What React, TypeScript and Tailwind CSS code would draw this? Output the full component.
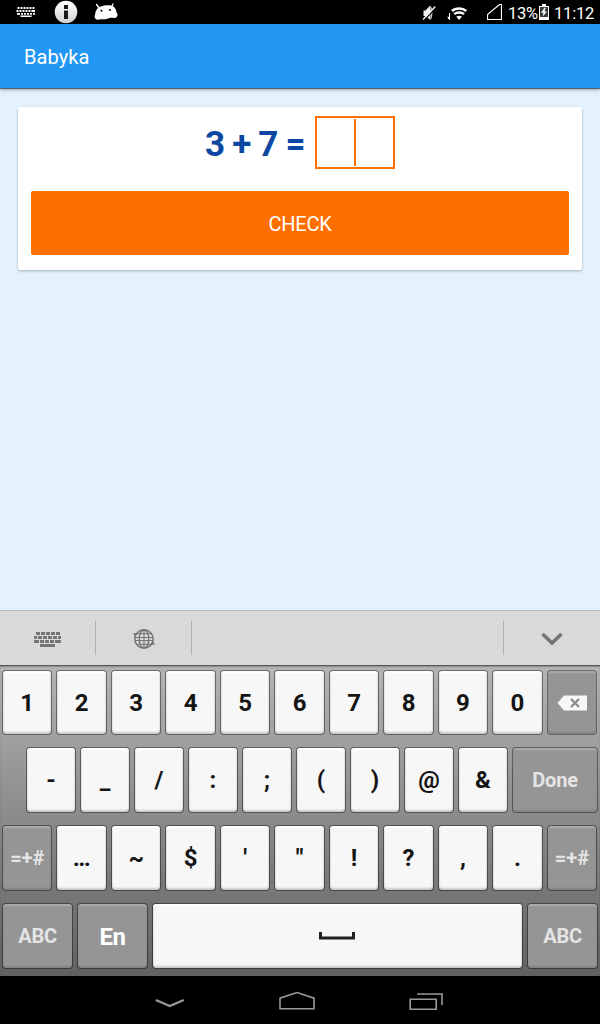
import type { ReactNode } from "react";

const keyBase =
  "flex shrink-0 items-center justify-center rounded-[4px] border border-black/40 bg-clip-padding";
const lightKey =
  "bg-[#f7f7f7] text-[#141414] shadow-[inset_0_2px_1px_#ffffff,inset_0_-2px_2px_rgba(0,0,0,0.18),inset_1px_0_1px_rgba(0,0,0,0.05),inset_-1px_0_1px_rgba(0,0,0,0.05)]";
const darkKey =
  "bg-[#959595] text-[#e4e4e4] shadow-[inset_0_2px_1px_rgba(255,255,255,0.2),inset_0_-2px_2px_rgba(0,0,0,0.12)]";

function Key({
  children,
  dark = false,
  className,
}: {
  children: ReactNode;
  dark?: boolean;
  className: string;
}) {
  return (
    <button type="button" className={`${keyBase} ${dark ? darkKey : lightKey} ${className}`}>
      {children}
    </button>
  );
}

function StatusKeyboardIcon() {
  return (
    <svg width="20" height="10" viewBox="0 0 20 10" fill="#fff">
      <path d="M1.5 0h2v2h-2zM4.5 0h2v2h-2zM7.5 0h2v2h-2zM10.5 0h2v2h-2zM13.5 0h2v2h-2zM16.5 0h2v2h-2zM.5 3h2v2h-2zM3.5 3h2v2h-2zM6.5 3h2v2h-2zM9.5 3h2v2h-2zM12.5 3h2v2h-2zM15.5 3H19v2h-3.500zM1 6h3v1.800H1zM5 6h2v1.800H5zM8 6h2v1.800H8zM11 6h2v1.800h-2zM14 6h2v1.800h-2zM17 6h2v1.800h-2zM4.500 8.500h11V10h-11z" />
    </svg>
  );
}

function InfoIcon() {
  return (
    <svg width="24" height="24" viewBox="0 0 24 24">
      <defs>
        <linearGradient id="info" x1="0" y1="0" x2="0" y2="1">
          <stop offset="0" stopColor="#fff" />
          <stop offset="1" stopColor="#d2d2d2" />
        </linearGradient>
      </defs>
      <circle cx="12" cy="12" r="11.300" fill="url(#info)" />
      <path d="M10 5h4v4h-4zM10 10.500h4V19h-4z" fill="#191919" />
    </svg>
  );
}

function RobotIcon() {
  return (
    <svg width="24" height="18" viewBox="0 0 24 18">
      <path d="M2.500 1.500 5 5M19 1 17.500 4" stroke="#fff" strokeWidth="1.300" strokeLinecap="round" />
      <path
        d="M2.500 7C5 1.800 17 1 20.300 4.200c1.400 1.500 2.200 3.500 2.200 5.300 1.800 1.500 1.200 4.500-1 5.200-1.700.8-4-.2-6 .2-2.500.7-3.500 1.300-6 1.400-1.500.1-2.600-.3-4 .2C1.200 17.600-.4 14 1.200 11.200c0-1.500.5-3 1.300-4.200Z"
        fill="#fff"
      />
      <circle cx="7.500" cy="7.800" r="1" fill="#000" />
      <circle cx="16" cy="7" r="1" fill="#000" />
    </svg>
  );
}

function MuteIcon() {
  return (
    <svg width="14" height="16" viewBox="0 0 14 16">
      <path d="M1.500 5.500h2L7.500 1.200c1.800 2 1.800 11 0 13L3.500 11h-2Z" fill="#f2f2f2" />
      <path d="M7.500 1.500h1.200c1.600 3.200 1.600 9.300 0 12.500H7.500" stroke="#f2f2f2" fill="none" />
      <path d="M2.200 15.300 13.200 3.500" stroke="#000" strokeWidth="1.200" />
      <path d="M1 14.500 13.300 1.500" stroke="#f2f2f2" strokeWidth="1.400" />
    </svg>
  );
}

function WifiIcon() {
  return (
    <svg width="20" height="14" viewBox="0 0 20 14">
      <path d="M.5 10h1v2M2.500 6v7" stroke="#fff" strokeWidth="1" fill="none" />
      <path d="M5 4C8.700.6 15.700.6 19.300 4" stroke="#fff" strokeWidth="2.500" fill="none" />
      <path d="M7.300 7.100c2.500-2.300 7.200-2.300 9.700 0" stroke="#fff" strokeWidth="2.500" fill="none" />
      <path d="M9.300 9.700c1.600-1.300 4.100-1.300 5.600 0L12.100 13Z" fill="#fff" />
    </svg>
  );
}

function SignalIcon() {
  return (
    <svg width="15" height="16" viewBox="0 0 15 16">
      <path d="M14.500.5v15H.5v-5L12.500.5Z" fill="none" stroke="#fff" strokeWidth="1.200" />
    </svg>
  );
}

function BatteryIcon() {
  return (
    <svg width="10" height="16" viewBox="0 0 10 16">
      <path d="M3 0h4v2h3v14H0V2h3Z" fill="#fff" />
      <path d="M1 3h8v10H1z" fill="#3c3c3c" />
      <path d="m5.500 3.800-3.500 5h2.400l-.7 3.700L8 7.600H5.500l1.200-3.800Z" fill="#fff" />
    </svg>
  );
}

function PanelKeyboardIcon() {
  return (
    <svg width="28" height="16" viewBox="0 0 28 16" fill="#747474">
      <path d="M2 0h4v3H2zM7 0h4v3H7zM12 0h4v3h-4zM17 0h4v3h-4zM22 0h4v3h-4zM0 4h3v3H0zM4 4h4v3H4zM9 4h4v3H9zM14 4h4v3h-4zM19 4h4v3h-4zM24 4h3v3h-3zM0 8h5v3H0zM6 8h4v3H6zM11 8h4v3h-4zM16 8h4v3h-4zM21 8h6v3h-6zM6 12h15v3H6z" />
    </svg>
  );
}

function GlobeIcon() {
  return (
    <svg width="22" height="20" viewBox="0 0 22 20" fill="none" stroke="#747474" strokeWidth="1.300">
      <circle cx="11" cy="10" r="9.200" strokeWidth="1.500" />
      <ellipse cx="11" cy="10" rx="4.800" ry="9" />
      <path d="M11 1v18M2 8.500h18M2 11.500h18M4 4.800h14M4 15.200h14" strokeWidth="1.100" />
      <path d="M0 4.200h4.500L2 7.800ZM22 15.800h-4.500L20 12.200Z" fill="#747474" stroke="none" />
    </svg>
  );
}

export default function App() {
  return (
    <div className="flex h-[1024px] w-[600px] flex-col overflow-hidden bg-[#e3f2fd] font-['Roboto',sans-serif]">
      <header className="flex h-6 shrink-0 items-center justify-between bg-black text-white">
        <div className="flex items-center pl-4">
          <StatusKeyboardIcon />
          <div className="ml-[18px]"><InfoIcon /></div>
          <div className="ml-4"><RobotIcon /></div>
        </div>
        <div className="flex items-center pr-[6px]">
          <div className="pt-[2px]"><MuteIcon /></div>
          <div className="ml-[11px] pt-[4px]"><WifiIcon /></div>
          <div className="ml-[20px]"><SignalIcon /></div>
          <span className="ml-[6px] w-[31px] pt-[3px] text-[16.500px] leading-[21px] tracking-[-0.3px]">13%</span>
          <BatteryIcon />
          <span className="ml-[5px] w-[40px] pt-[3px] text-[16.500px] leading-[21px] tracking-[-0.2px]">11:12</span>
        </div>
      </header>

      <div className="relative flex h-16 shrink-0 items-center bg-[#2196f3] pl-6 pt-[2px] text-[20px] tracking-[0.1px] text-white shadow-[0_1px_1px_rgba(0,0,0,0.5),0_2px_4px_rgba(0,0,0,0.25)]">
        Babyka
      </div>

      <main className="flex-1 px-[18px] pt-[19px]">
        <section className="flex h-[163px] flex-col rounded-[2px] bg-white px-[13px] pt-[9px] shadow-[0_1px_3px_rgba(0,0,0,0.28)]">
          <div className="flex h-[53px] items-center justify-center gap-[10px]">
            <span className="w-[100px] whitespace-nowrap pt-[3px] text-[35px] font-bold leading-none tracking-[-0.8px] text-[#0d47a1]">
              3 + 7 =
            </span>
            <div className="flex h-[53px] w-20 items-center justify-center border-2 border-[#ff6f00]">
              <span className="h-[47px] w-[2px] bg-[#ff6f00]" />
            </div>
          </div>
          <button
            type="button"
            className="mt-[22px] flex h-16 items-center justify-center rounded-[2px] bg-[#ff6f00] pt-[2px] text-[20px] tracking-[-0.2px] text-white"
          >
            CHECK
          </button>
        </section>
      </main>

      <div className="flex h-[55px] shrink-0 border-t border-[#bdbdbd] bg-[#d9d9d9]">
        <div className="flex w-24 items-center justify-center pt-[4px]"><PanelKeyboardIcon /></div>
        <span className="-ml-px mt-[10px] h-[34px] w-px bg-[#b0b0b0]" />
        <div className="flex w-24 items-center justify-center pt-px"><GlobeIcon /></div>
        <span className="-ml-px mt-[10px] h-[34px] w-px bg-[#b0b0b0]" />
        <span className="ml-[311px] mt-[10px] h-[34px] w-px bg-[#b0b0b0]" />
        <div className="flex flex-1 items-center justify-center pt-[2px]">
          <svg width="22" height="14" viewBox="0 0 22 14">
            <path d="m1.500 2 9.500 9 9.500-9" fill="none" stroke="#747474" strokeWidth="3.600" />
          </svg>
        </div>
      </div>

      <div className="flex h-[311px] shrink-0 flex-col bg-linear-to-b from-[#b4b4b4] to-[#616161] pl-[2px] pt-[5px] text-[24px] font-bold leading-none shadow-[inset_0_2px_2px_-1px_rgba(0,0,0,0.7)]">
        <div className="mb-3 flex h-[65px] shrink-0 gap-1">
          {["1", "2", "3", "4", "5", "6", "7", "8", "9", "0"].map((n) => (
            <Key key={n} className="w-[50.470px]">{n}</Key>
          ))}
          <Key dark className="w-[50.470px]">
            <svg width="30" height="16" viewBox="0 0 30 16">
              <path d="M7 .5h23v15H7L.5 8Z" fill="#f7f7f7" />
              <path d="m14 4 8 8m0-8-8 8" stroke="#858585" strokeWidth="2" />
            </svg>
          </Key>
        </div>

        <div className="mb-3 flex h-[66px] shrink-0 gap-1 pl-6">
          {["-", "_", "/", ":", ";", "(", ")", "@", "&"].map((n) => (
            <Key key={n} className="w-[50px]">{n}</Key>
          ))}
          <Key dark className="w-[86px] text-[20px] tracking-[-0.2px]">Done</Key>
        </div>

        <div className="mb-3 flex h-[66px] shrink-0 gap-1">
          <Key dark className="w-[50.470px] text-[20px]">=+#</Key>
          {["…", "~", "$", "'", "\"", "!", "?", ",", "."].map((n) => (
            <Key key={n} className="w-[50.470px]">{n}</Key>
          ))}
          <Key dark className="w-[50.470px] text-[20px]">=+#</Key>
        </div>

        <div className="flex h-[66px] shrink-0 gap-1">
          <Key dark className="w-[71px] text-[20px] tracking-[-0.2px]">ABC</Key>
          <Key dark className="w-[71px] pt-[2px] text-white tracking-[-0.4px]">En</Key>
          <Key className="w-[371px] pr-[2px]">
            <svg width="36" height="8" viewBox="0 0 36 8">
              <path d="M1.500 0v6h33V0" fill="none" stroke="#202020" strokeWidth="3" />
            </svg>
          </Key>
          <Key dark className="w-[71px] text-[20px] tracking-[-0.2px]">ABC</Key>
        </div>
      </div>

      <nav className="flex h-12 shrink-0 items-center bg-black pl-[155px]">
        <svg width="290" height="20" viewBox="0 0 290 20" fill="none" stroke="#999" strokeWidth="1.600">
          <path d="m.8 10 14 6 14-6" strokeWidth="2.200" />
          <path d="M125 18.800V8.200l17-5.700 17 5.700v10.600Z" />
          <path d="M255.200 9.200h26v10h-26zM262 4h25v11" />
        </svg>
      </nav>
    </div>
  );
}
